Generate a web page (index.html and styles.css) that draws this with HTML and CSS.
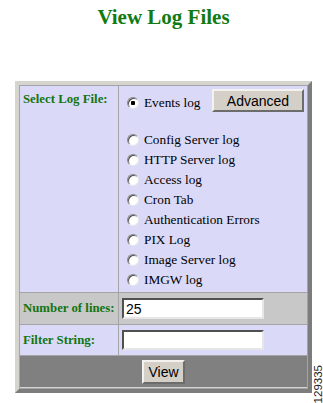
FILE: index.html
```html
<!DOCTYPE html>
<html lang="en">
<head>
  <meta charset="UTF-8">
  <title>View Log Files</title>
  <link rel="stylesheet" href="styles.css">
</head>
<body>

  <h1 class="title">View Log Files</h1>

  <form class="log-form">
    <table class="log-table">
      <tr class="row-light">
        <td class="label label-top">Select Log File:</td>
        <td class="value value-list">
          <div class="first-line">
            <label class="opt opt-first"><input type="radio" name="log" checked> Events log</label>
            <button type="button" class="btn btn-adv">Advanced</button>
          </div>
          <div class="opt-list">
            <label class="opt"><input type="radio" name="log"> Config Server log</label>
            <label class="opt"><input type="radio" name="log"> HTTP Server log</label>
            <label class="opt"><input type="radio" name="log"> Access log</label>
            <label class="opt"><input type="radio" name="log"> Cron Tab</label>
            <label class="opt"><input type="radio" name="log"> Authentication Errors</label>
            <label class="opt"><input type="radio" name="log"> PIX Log</label>
            <label class="opt"><input type="radio" name="log"> Image Server log</label>
            <label class="opt"><input type="radio" name="log"> IMGW log</label>
          </div>
        </td>
      </tr>
      <tr class="row-gray">
        <td class="label">Number of lines:</td>
        <td class="value"><input type="text" class="field" value="25"></td>
      </tr>
      <tr class="row-light row-filter">
        <td class="label">Filter String:</td>
        <td class="value"><input type="text" class="field"></td>
      </tr>
      <tr class="row-foot">
        <td colspan="2" class="foot"><button type="button" class="btn btn-view">View</button></td>
      </tr>
    </table>
  </form>

  <!-- figure number -->
  <div class="fig-num">129335</div>

</body>
</html>
```

FILE: styles.css
```css
body, html {
  margin: 0;
  height: 100%;
  background: #fff;
}

body {
  position: relative;
  padding-left: 4px;
  font-family: "Liberation Serif", "Times New Roman", serif;
  font-size: 13.3px;
  color: #000;
}

.title {
  margin: 5px 0 0;
  line-height: 24px;
  font-size: 21px;
  font-weight: bold;
  text-align: center;
  color: #117a11;
}

.log-form {
  margin: 52px 0 0;
}

.log-table {
  width: 297px;
  margin: 0 auto;
  table-layout: fixed;
  border-collapse: separate;
  border-spacing: 1px;
  border: 4px solid;
  border-color: #d6d4ce #7c7c7c #7c7c7c #d6d4ce;
  background: #a4a4a8;
}

.log-table td {
  box-sizing: border-box;
  padding: 0;
}

.label {
  width: 98px;
  padding: 0 0 0 3px !important;
  font-size: 12.8px;
  font-weight: bold;
  color: #127512;
  vertical-align: middle;
}

.label-top {
  vertical-align: top;
  padding-top: 6px !important;
}

.row-light td {
  background: #dadaf8;
}

.row-gray td {
  background: #c8c8c8;
}

.row-light .label-top,
.row-light .value-list {
  height: 206px;
}

.row-gray td {
  height: 31px;
}

.row-filter td {
  height: 30px;
}

.value {
  padding: 0 3px !important;
  vertical-align: middle;
}

.value-list {
  vertical-align: top;
  padding: 3px 3px 0 8px !important;
}

.first-line {
  display: flex;
  justify-content: space-between;
  align-items: flex-start;
  height: 23px;
}

.opt {
  display: flex;
  align-items: center;
  height: 20px;
  line-height: 20px;
  white-space: nowrap;
}

.opt-first {
  margin-top: 4px;
}

.opt-list {
  margin-top: 18px;
}

.opt input {
  appearance: none;
  -webkit-appearance: none;
  box-sizing: border-box;
  width: 12px;
  height: 12px;
  margin: 0 5px 0 0;
  border-radius: 50%;
  border: 1px solid;
  border-color: #8a8a8a #e8e8e8 #e8e8e8 #8a8a8a;
  background: #fff;
  box-shadow: inset 1px 1px 0 #505050;
}

.opt input:checked {
  background: radial-gradient(circle, #000 0, #000 2px, #fff 2.5px);
}

.btn {
  box-sizing: border-box;
  font-family: "Liberation Sans", Arial, sans-serif;
  font-size: 14px;
  color: #000;
  background: #d4d0c8;
  border: 2px solid;
  border-color: #f4f2ee #6c6c6c #6c6c6c #f4f2ee;
  padding: 0;
  cursor: pointer;
}

.btn-adv {
  width: 92px;
  height: 23px;
}

.field {
  box-sizing: border-box;
  display: block;
  width: 142px;
  height: 21px;
  margin: 0;
  padding: 0 2px;
  font-family: "Liberation Sans", Arial, sans-serif;
  font-size: 14px;
  background: #fff;
  border: 2px solid;
  border-color: #505050 #e6e6e6 #e6e6e6 #505050;
  outline: none;
}

.row-filter .field {
  height: 20px;
}

.foot {
  height: 32px;
  background: #808080;
  text-align: center;
  vertical-align: middle;
  border-bottom: 1px solid #d6d4ce;
}

.btn-view {
  width: 43px;
  height: 24px;
}

.fig-num {
  position: absolute;
  right: 0;
  top: 365px;
  writing-mode: vertical-rl;
  transform: rotate(180deg);
  font-family: "Liberation Sans", Arial, sans-serif;
  font-size: 11.5px;
  line-height: 9px;
  color: #222;
}
```
